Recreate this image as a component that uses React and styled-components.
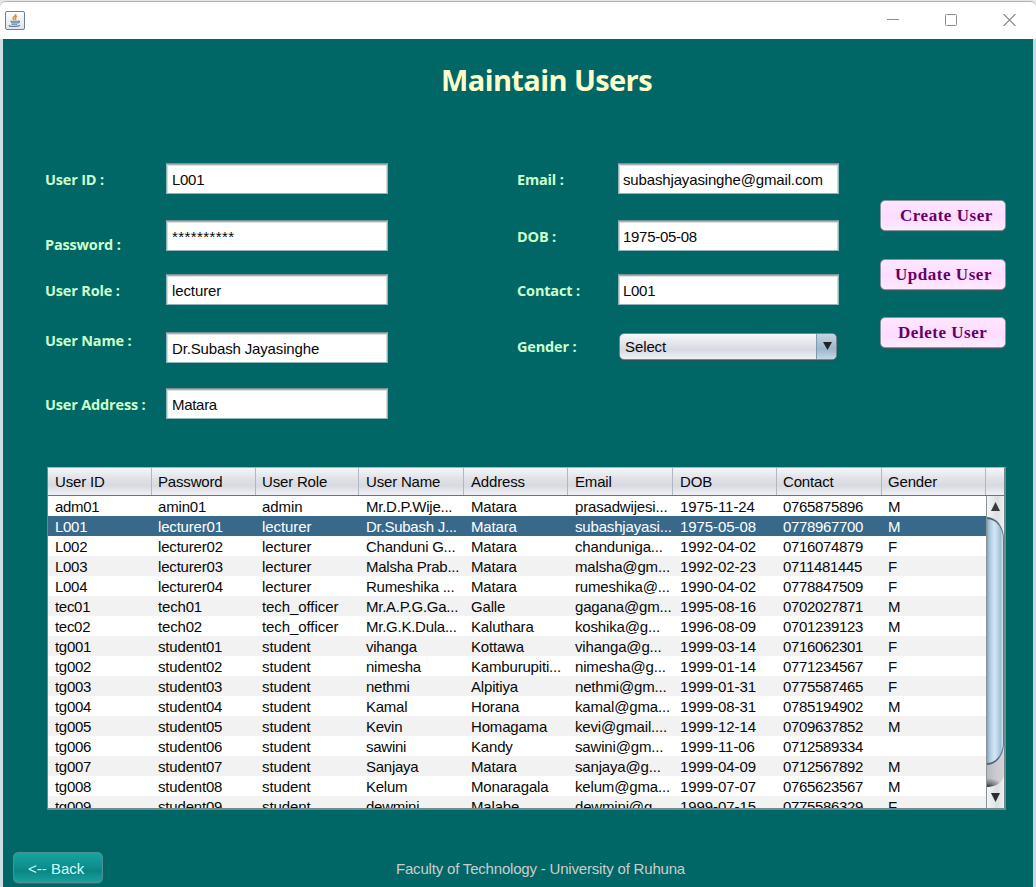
import React from "react";
import styled, { createGlobalStyle } from "styled-components";

const Global = createGlobalStyle`
  *, *::before, *::after { box-sizing: border-box; }
  html, body { margin: 0; padding: 0; overflow: hidden; }
  body { font-family: "Liberation Sans", Arial, sans-serif; font-size: 15px; color: #080808; }
`;

const Frame = styled.div`
  width: 1036px;
  height: 887px;
  display: flex;
  flex-direction: column;
  background: #e6e6e6;
  padding-top: 1px;
  overflow: hidden;
`;

const TitleBar = styled.header`
  flex: none;
  height: 38px;
  display: flex;
  align-items: center;
  justify-content: space-between;
  padding: 0 20px 0 5px;
  background: #fff;
  border-top: 1px solid #b1b1b1;
  border-radius: 6px 6px 0 0;
`;

const WindowControls = styled.div`
  display: flex;
  gap: 46px;
  margin-top: -1px;
`;

const Content = styled.main`
  flex: 1;
  min-height: 0;
  display: flex;
  flex-direction: column;
  background: #006766;
  border-left: 3px solid #cddfe4;
  border-right: 3px solid #ccd6e2;
`;

const Title = styled.h1`
  margin: 21px 0 0 438px;
  height: 40px;
  line-height: 40px;
  font-family: "Open Sans", "Noto Sans", sans-serif;
  font-weight: 700;
  font-size: 29px;
  letter-spacing: -0.6px;
  color: #ffffcc;
  white-space: nowrap;
`;

const Form = styled.section`
  display: flex;
  height: 345px;
  padding: 63px 0 0 42px;
`;

const Column = styled.div`
  width: ${(p) => p.$width}px;
  display: flex;
  flex-direction: column;
`;

const Row = styled.div`
  display: flex;
  align-items: flex-start;
  height: 31px;
  margin-bottom: ${(p) => p.$gap || 0}px;
`;

const Label = styled.label`
  width: ${(p) => p.$width}px;
  margin-top: ${(p) => p.$drop}px;
  height: 31px;
  line-height: 32px;
  font-family: "Open Sans", "Noto Sans", sans-serif;
  font-weight: 700;
  font-size: 14.5px;
  letter-spacing: -0.17px;
  color: #ccffcc;
  white-space: nowrap;
`;

const Field = styled.div`
  width: ${(p) => p.$width}px;
  height: 31px;
  padding-left: ${(p) => p.$width - 217}px;
  line-height: 32px;
  border: 1px solid #8fb5b8;
  border-top-color: #7d9295;
  background: #fff;
  box-shadow: inset 0 1px 0 #a9adb0, inset 0 2px 1px #dcdfe0, inset 1px 0 0 #d3dada, inset -1px 0 0 #d3dada;
  letter-spacing: ${(p) => p.$spacing || 0}px;
  white-space: nowrap;
`;

const Select = styled.div`
  display: flex;
  width: 218px;
  height: 27px;
  margin: 1px 0 0 1px;
  border: 1px solid #71868f;
  border-radius: 5px;
  overflow: hidden;
  line-height: 26px;
  background: linear-gradient(#f8f8fb, #e3e4ea 40%, #d7d9e1 62%, #f1f2f7);
  box-shadow: 0 1px 0 #28585c;
`;

const SelectValue = styled.span`
  flex: 1;
  padding-left: 5px;
  letter-spacing: -0.1px;
`;

const SelectArrow = styled.span`
  width: 20px;
  display: flex;
  justify-content: center;
  align-items: center;
  padding-left: 2px;
  border-left: 1px solid #7e9bb2;
  background: linear-gradient(#c6d5e2, #a3bbcf 50%, #9db6cb 60%, #c5d8e8);
`;

const Actions = styled.div`
  display: flex;
  flex-direction: column;
  gap: 27.5px;
  padding-top: 37px;
`;

const ActionButton = styled.button`
  width: 126px;
  height: 31px;
  padding: 0 0 0 ${(p) => p.$inset}px;
  text-align: left;
  border: 1px solid #8d9499;
  border-radius: 5px;
  background: linear-gradient(#ffe6ff, #fddcff 55%, #ffeaff);
  box-shadow: 0 1px 0 #38595d;
  font-family: "Liberation Serif", "Times New Roman", serif;
  font-weight: 700;
  font-size: 17px;
  line-height: 29px;
  letter-spacing: 0.53px;
  color: #660066;
  white-space: nowrap;
`;

const TableBox = styled.section`
  flex: none;
  width: 959px;
  height: 343px;
  margin: 22px 0 0 44px;
  border: 1px solid #66898b;
  border-top-color: #a3b5b7;
  border-bottom: 2px solid #6e8f91;
  border-right: 2px solid #71898b;
  background: #fff;
  overflow: hidden;
`;

const columns = "104px 104px 103px 105px 104px 105px 104px 105px 104px 1fr";

const HeaderRow = styled.div`
  display: grid;
  grid-template-columns: ${columns};
  height: 28px;
  line-height: 27px;
  border-bottom: 1px solid #66757f;
  background: linear-gradient(#f5f6f9, #e1e2e8 40%, #d8dae1 65%, #e9ebf0 90%, #eff0f5);
`;

const HeaderCell = styled.div`
  padding-left: ${(p) => p.$inset}px;
  border-right: 1px solid #b2b8c1;
  letter-spacing: -0.18px;
  white-space: nowrap;
  &:last-child { border-right: 0; }
`;

const TableArea = styled.div`
  display: flex;
  height: 312px;
`;

const Rows = styled.div`
  flex: 1;
  overflow: hidden;
`;

const DataRow = styled.div`
  display: grid;
  grid-template-columns: ${columns};
  height: 20px;
  line-height: 21px;
  background: ${(p) => (p.$selected ? "#39698a" : p.$odd ? "#f2f2f2" : "#fff")};
  color: ${(p) => (p.$selected ? "#fff" : "#080808")};
`;

const Cell = styled.div`
  padding-left: ${(p) => p.$inset}px;
  letter-spacing: ${(p) => p.$spacing}px;
  white-space: nowrap;
  overflow: hidden;
`;

const ScrollBar = styled.div`
  flex: none;
  width: 18px;
  display: flex;
  flex-direction: column;
  border-left: 1px solid #8b9499;
  background: linear-gradient(90deg, #f4f5f8, #dddee2 60%, #f0f1f4);
`;

const ScrollButton = styled.div`
  flex: none;
  height: 21px;
  display: flex;
  align-items: center;
  justify-content: center;
`;

const Thumb = styled.div`
  flex: none;
  z-index: 1;
  height: 248px;
  border: 2px solid #4d6475;
  border-left: 0;
  border-right: 1px solid #5f7789;
  border-radius: 0 17px 17px 0 / 0 22px 22px 0;
  background: linear-gradient(90deg, #7f9fb8, #a9c5db 15%, #d2e6f6 45%, #c3dcef 60%, #a1bed5 85%, #d3e7f4);
`;

const TrackEnd = styled.div`
  flex: 1;
  margin-top: -24px;
  border-radius: 0 0 17px 0 / 0 0 13px 0;
  background:
    radial-gradient(ellipse 17px 9px at 0 100%, #2b2b2b, rgba(90, 90, 90, 0.6) 50%, transparent),
    linear-gradient(90deg, #b9b9c0, #c9c9cf 50%, #d3d3da);
`;

const Footer = styled.footer`
  display: flex;
  margin: 42px 0 0 10px;
`;

const BackButton = styled.button`
  width: 90px;
  height: 31px;
  padding: 0 0 0 14px;
  text-align: left;
  border: 1px solid #4b8f91;
  border-radius: 5px;
  background: linear-gradient(#17a3a1, #0d8e8c 50%, #0a8583 60%, #17a09e);
  box-shadow: inset 0 0 1px #59a5a6, 0 1px 0 #2b7073;
  font: 15px "Liberation Sans", Arial, sans-serif;
  line-height: 31px;
  color: #ccffff;
`;

const FooterText = styled.div`
  margin-left: 293px;
  line-height: 34px;
  letter-spacing: -0.19px;
  color: #cccccc;
`;

const JavaIcon = () => (
  <svg width="20" height="20" viewBox="0 0 20 20" fill="none">
    <defs>
      <linearGradient id="tile" x1="0" y1="0" x2="0" y2="1">
        <stop offset="0" stopColor="#fdfdff" />
        <stop offset="1" stopColor="#dfe3ec" />
      </linearGradient>
    </defs>
    <rect x="0.5" y="0.5" width="19" height="18" rx="1.5" fill="url(#tile)" stroke="#6c8295" />
    <path d="M10.600 3c1 2-3.200 2.800-2.600 4.400.3.800 1 .9 1.200 1.500M12 5.200c-1.500.6-2.200 1.400-1.500 2.200.4.600.2 1-.3 1.400" stroke="#e58a3c" strokeWidth="1.500" />
    <path d="M5.200 10.300h8.200M6 11.800h6.700M6.500 13.300h5.800M13 10.200c2.300-.6 2 1.500-.3 2M4.500 14.300c-2.500 1.500 8.500 1.500 10.500-.1" stroke="#5d8198" strokeWidth="1.100" />
  </svg>
);

const left = [
  { label: "User ID :", value: "L001", gap: 26, drop: 1, spacing: -0.3 },
  { label: "Password :", value: "**********", gap: 23, drop: 9, spacing: 0.4 },
  { label: "User Role :", value: "lecturer", gap: 27, drop: 1, spacing: -0.1 },
  { label: "User Name :", value: "Dr.Subash Jayasinghe", gap: 25, drop: -7, spacing: -0.15 },
  { label: "User Address :", value: "Matara", drop: 1, spacing: -0.3 },
];

const right = [
  { label: "Email :", value: "subashjayasinghe@gmail.com", gap: 26, drop: 1, spacing: -0.15 },
  { label: "DOB :", value: "1975-05-08", gap: 23, drop: 1, spacing: -0.28 },
  { label: "Contact :", value: "L001", gap: 27, drop: 1, spacing: -0.3 },
];

const fields = [
  { title: "User ID", inset: 7, spacing: -0.3 },
  { title: "Password", inset: 6, spacing: -0.18 },
  { title: "User Role", inset: 6, spacing: -0.08 },
  { title: "User Name", inset: 7, spacing: -0.25 },
  { title: "Address", inset: 7, spacing: -0.18 },
  { title: "Email", inset: 7, spacing: -0.17 },
  { title: "DOB", inset: 7, spacing: -0.08 },
  { title: "Contact", inset: 6, spacing: -0.34 },
  { title: "Gender", inset: 6, spacing: 0 },
];

const users = [
  ["adm01", "amin01", "admin", "Mr.D.P.Wije...", "Matara", "prasadwijesi...", "1975-11-24", "0765875896", "M"],
  ["L001", "lecturer01", "lecturer", "Dr.Subash J...", "Matara", "subashjayasi...", "1975-05-08", "0778967700", "M"],
  ["L002", "lecturer02", "lecturer", "Chanduni G...", "Matara", "chanduniga...", "1992-04-02", "0716074879", "F"],
  ["L003", "lecturer03", "lecturer", "Malsha Prab...", "Matara", "malsha@gm...", "1992-02-23", "0711481445", "F"],
  ["L004", "lecturer04", "lecturer", "Rumeshika ...", "Matara", "rumeshika@...", "1990-04-02", "0778847509", "F"],
  ["tec01", "tech01", "tech_officer", "Mr.A.P.G.Ga...", "Galle", "gagana@gm...", "1995-08-16", "0702027871", "M"],
  ["tec02", "tech02", "tech_officer", "Mr.G.K.Dula...", "Kaluthara", "koshika@g...", "1996-08-09", "0701239123", "M"],
  ["tg001", "student01", "student", "vihanga", "Kottawa", "vihanga@g...", "1999-03-14", "0716062301", "F"],
  ["tg002", "student02", "student", "nimesha", "Kamburupiti...", "nimesha@g...", "1999-01-14", "0771234567", "F"],
  ["tg003", "student03", "student", "nethmi", "Alpitiya", "nethmi@gm...", "1999-01-31", "0775587465", "F"],
  ["tg004", "student04", "student", "Kamal", "Horana", "kamal@gma...", "1999-08-31", "0785194902", "M"],
  ["tg005", "student05", "student", "Kevin", "Homagama", "kevi@gmail....", "1999-12-14", "0709637852", "M"],
  ["tg006", "student06", "student", "sawini", "Kandy", "sawini@gm...", "1999-11-06", "0712589334", ""],
  ["tg007", "student07", "student", "Sanjaya", "Matara", "sanjaya@g...", "1999-04-09", "0712567892", "M"],
  ["tg008", "student08", "student", "Kelum", "Monaragala", "kelum@gma...", "1999-07-07", "0765623567", "M"],
  ["tg009", "student09", "student", "dewmini", "Malabe", "dewmini@g...", "1999-07-15", "0775586329", "F"],
];

const FormRow = ({ item, labelWidth, fieldWidth }) => (
  <Row $gap={item.gap}>
    <Label $width={labelWidth} $drop={item.drop}>{item.label}</Label>
    <Field $width={fieldWidth} $spacing={item.spacing}>{item.value}</Field>
  </Row>
);

export default function App() {
  return (
    <Frame>
      <Global />
      <TitleBar>
        <JavaIcon />
        <WindowControls>
          <svg width="12" height="12" fill="none" stroke="#8c8c8c"><path d="M0 5.500h12" /></svg>
          <svg width="12" height="12" fill="none" stroke="#8c8c8c"><rect x="0.500" y="0.500" width="11" height="11" rx="1" /></svg>
          <svg width="13" height="12" fill="none" stroke="#8c8c8c" strokeWidth="1.200"><path d="M.5 0l12 12M12.500 0l-12 12" /></svg>
        </WindowControls>
      </TitleBar>
      <Content>
        <Title>Maintain Users</Title>
        <Form>
          <Column $width={472}>
            {left.map((item) => <FormRow key={item.label} item={item} labelWidth={121} fieldWidth={222} />)}
          </Column>
          <Column $width={363}>
            {right.map((item) => <FormRow key={item.label} item={item} labelWidth={101} fieldWidth={221} />)}
            <Row>
              <Label $width={101} $drop={-1}>Gender :</Label>
              <Select>
                <SelectValue>Select</SelectValue>
                <SelectArrow>
                  <svg width="9" height="9"><path d="M0 0h9L4.500 8z" fill="#1c2429" /></svg>
                </SelectArrow>
              </Select>
            </Row>
          </Column>
          <Actions>
            <ActionButton $inset={19}>Create User</ActionButton>
            <ActionButton $inset={14}>Update User</ActionButton>
            <ActionButton $inset={17}>Delete User</ActionButton>
          </Actions>
        </Form>
        <TableBox>
          <HeaderRow>
            {fields.map((f) => <HeaderCell key={f.title} $inset={f.inset}>{f.title}</HeaderCell>)}
            <HeaderCell $inset={0} />
          </HeaderRow>
          <TableArea>
            <Rows>
              {users.map((user, i) => (
                <DataRow key={user[0]} $odd={i % 2 === 1} $selected={i === 1}>
                  {user.map((value, c) => (
                    <Cell key={fields[c].title} $inset={fields[c].inset} $spacing={fields[c].spacing}>{value}</Cell>
                  ))}
                </DataRow>
              ))}
            </Rows>
            <ScrollBar>
              <ScrollButton><svg width="9" height="9"><path d="M0 9h9L4.500 0z" fill="#3a3a3a" /></svg></ScrollButton>
              <Thumb />
              <TrackEnd />
              <ScrollButton><svg width="9" height="9"><path d="M0 0h9L4.500 9z" fill="#2c2c2c" /></svg></ScrollButton>
            </ScrollBar>
          </TableArea>
        </TableBox>
        <Footer>
          <BackButton>&lt;-- Back</BackButton>
          <FooterText>Faculty of Technology - University of Ruhuna</FooterText>
        </Footer>
      </Content>
    </Frame>
  );
}
